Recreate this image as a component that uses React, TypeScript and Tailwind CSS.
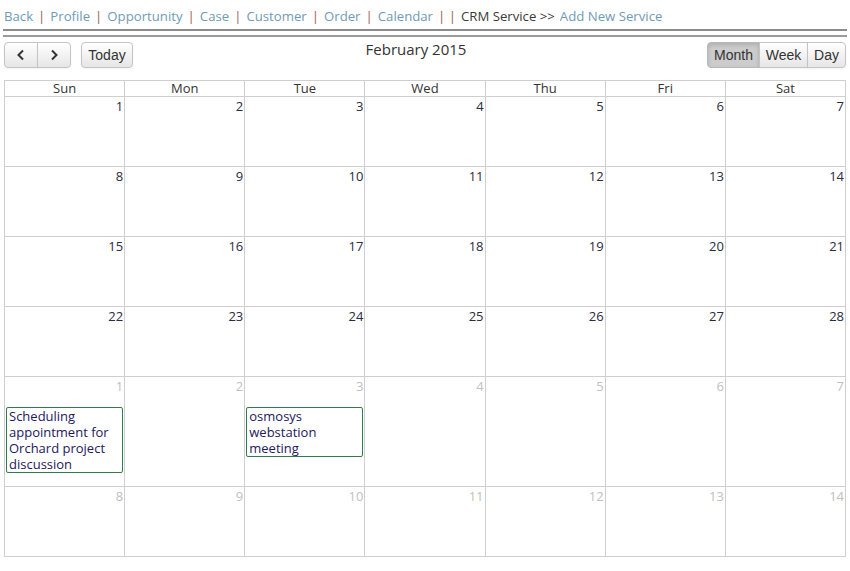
import React from "react";

const navLinks = ["Back", "Profile", "Opportunity", "Case", "Customer", "Order", "Calendar"];
const dayNames = ["Sun", "Mon", "Tue", "Wed", "Thu", "Fri", "Sat"];

type Cell = { day: number; other?: boolean; event?: string[] };

// February 2015 starts on a Sunday, so the grid is 4 clean weeks plus 2 of March
const weeks: Cell[][] = [
  [1, 2, 3, 4, 5, 6, 7].map((d) => ({ day: d })),
  [8, 9, 10, 11, 12, 13, 14].map((d) => ({ day: d })),
  [15, 16, 17, 18, 19, 20, 21].map((d) => ({ day: d })),
  [22, 23, 24, 25, 26, 27, 28].map((d) => ({ day: d })),
  [
    { day: 1, other: true, event: ["Scheduling", "appointment for", "Orchard project", "discussion"] },
    { day: 2, other: true },
    { day: 3, other: true, event: ["osmosys", "webstation", "meeting"] },
    { day: 4, other: true },
    { day: 5, other: true },
    { day: 6, other: true },
    { day: 7, other: true },
  ],
  [8, 9, 10, 11, 12, 13, 14].map((d) => ({ day: d, other: true })),
];

const btn =
  "h-[26px] border border-[#c4c4c4] bg-gradient-to-b from-white to-[#e6e6e6] text-[#333] text-[14px] shadow-[inset_0_1px_0_rgba(255,255,255,0.4),0_1px_2px_rgba(0,0,0,0.05)]";

export default function App() {
  return (
    <div className="min-h-[571px] w-[850px] bg-white font-['Open_Sans',sans-serif] text-[#333]">
      {/* Breadcrumb nav */}
      <div className="flex h-[27px] items-end px-[4px] pb-[4px] text-[13.2px] leading-none">
        {navLinks.map((l, i) => (
          <React.Fragment key={l}>
            {i > 0 && <span className="px-[5px] text-[#a05a48]">|</span>}
            <span className="text-[#6f9bb5]">{l}</span>
          </React.Fragment>
        ))}
        <span className="px-[5px] text-[#a05a48]">| |</span>
        <span className="text-[#3a3a3a]">CRM Service &gt;&gt;</span>
        <span className="pl-[5px] text-[#6f9bb5]">Add New Service</span>
      </div>
      <div className="mx-[3px] mt-[2px] border-t-2 border-[#8c8c8c]" />
      <div className="mx-[3px] mt-[4px] border-t-2 border-[#9a9a9a]" />

      {/* Toolbar */}
      <div className="mt-[5px] flex items-start px-[4px] font-['Liberation_Sans',sans-serif]">
        <div className="flex">
          <button type="button" className={`${btn} flex w-[34px] items-center justify-center rounded-l-[4px]`}>
            <svg width="10" height="12" viewBox="0 0 10 12">
              <path d="M7 1.5 L2.5 6 L7 10.5" fill="none" stroke="#333" strokeWidth="2" />
            </svg>
          </button>
          <button type="button" className={`${btn} -ml-px flex w-[34px] items-center justify-center rounded-r-[4px]`}>
            <svg width="10" height="12" viewBox="0 0 10 12">
              <path d="M3 1.5 L7.5 6 L3 10.5" fill="none" stroke="#333" strokeWidth="2" />
            </svg>
          </button>
        </div>
        <button type="button" className={`${btn} ml-[10px] w-[52px] rounded-[4px]`}>
          Today
        </button>
        <div className="-mt-[4px] flex-1 pr-[8px] text-center font-['Open_Sans',sans-serif] text-[15px] text-[#333]">
          February 2015
        </div>
        <div className="flex">
          <button
            type="button"
            className="h-[26px] w-[53px] rounded-l-[4px] border border-[#b8b8b8] bg-[#cccccc] text-[14px] text-[#333] shadow-[inset_0_2px_4px_rgba(0,0,0,0.15)]"
          >
            Month
          </button>
          <button type="button" className={`${btn} -ml-px w-[49px]`}>
            Week
          </button>
          <button type="button" className={`${btn} -ml-px w-[39px] rounded-r-[4px]`}>
            Day
          </button>
        </div>
      </div>

      {/* Calendar grid */}
      <div className="ml-[4px] mt-[12px] w-[842px] border-t border-r border-[#cfcfcf] text-[13px]">
        <div className="grid grid-cols-7">
          {dayNames.map((d) => (
            <div key={d} className="h-[16px] border-b border-l border-[#cfcfcf] text-center leading-[15px]">
              {d}
            </div>
          ))}
        </div>
        {weeks.map((week, wi) => (
          <div key={wi} className={`grid grid-cols-7 ${wi === 4 ? "h-[110px]" : "h-[70px]"}`}>
            {week.map((c, ci) => (
              <div key={ci} className="border-b border-l border-[#cfcfcf]">
                <div
                  className={`pr-[1px] pt-[1px] text-right leading-[16px] ${
                    c.other ? "text-[#c0c0c0]" : "text-[#2a2a40]"
                  }`}
                >
                  {c.day}
                </div>
                {c.event && (
                  <div className="ml-[1px] mr-[1px] mt-[13px] rounded-[2px] border border-[#2f7d4c] px-[2px] leading-[16px] text-[#24185a]">
                    {c.event.map((line) => (
                      <div key={line}>{line}</div>
                    ))}
                  </div>
                )}
              </div>
            ))}
          </div>
        ))}
      </div>
    </div>
  );
}
